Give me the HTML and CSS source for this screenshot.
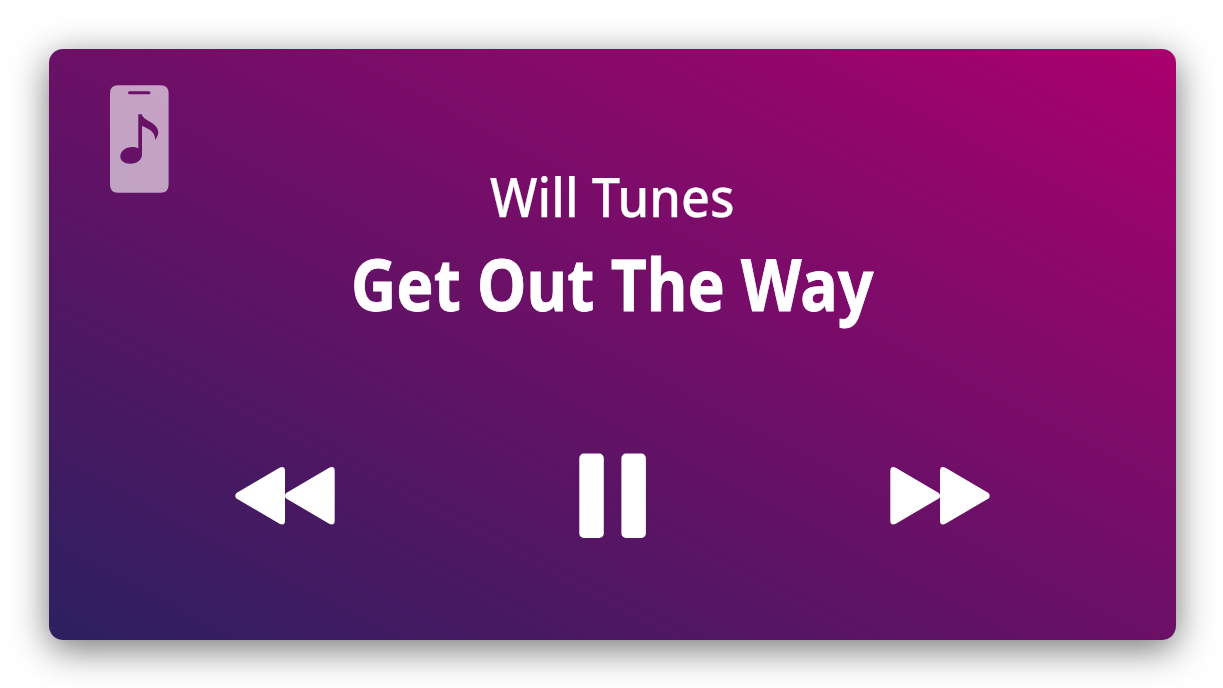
FILE: index.html
```html
<!DOCTYPE html>
<html lang="en">
<head>
<meta charset="utf-8">
<title>Will Tunes</title>
<link rel="stylesheet" href="styles.css">
</head>
<body>
<main class="player">
  <svg class="device" viewBox="0 0 59 108" aria-hidden="true">
    <path fill-rule="evenodd" d="M8 .3H50.600Q58.600 .3 58.600 8.300V99.800Q58.600 107.800 50.600 107.800H8Q0 107.800 0 99.800V8.300Q0 .3 8 .3ZM19.500 6.300Q18 6.300 18 7.800Q18 9.300 19.500 9.300H39Q40.500 9.300 40.500 7.800Q40.500 6.300 39 6.300ZM28.300 29.300H31.800C33 36 48.300 37.500 48.300 47.500C48.300 50 46.600 52.500 45.300 55C44.800 46 39 44 32 41V69C32 75 27 78.700 20.500 78.700C14 78.700 10.300 75.500 10.300 71.500C10.300 66 16 62 22 62C24.500 62 26.600 62.500 28.300 63.300Z"/>
  </svg>
  <header class="track">
    <p class="artist">Will Tunes</p>
    <h1 class="title">Get Out The Way</h1>
  </header>
  <nav class="controls">
    <button class="control" aria-label="Previous">
      <svg class="skip" viewBox="0 0 100 58"><path id="arrow" d="M1.500 26L44.500 .8Q50 -1.500 50 4V53.500Q50 59 44.500 56.700L1.500 31.500Q-1 29 1.500 26Z"/><use href="#arrow" x="49.700"/></svg>
    </button>
    <button class="control" aria-label="Pause">
      <svg class="pause" viewBox="0 0 67 85"><rect x=".3" y=".6" width="24.500" height="84.300" rx="4.500"/><rect x="42.400" y=".6" width="24.500" height="84.300" rx="4.500"/></svg>
    </button>
    <button class="control" aria-label="Next">
      <svg class="skip forward" viewBox="0 0 100 58"><use href="#arrow"/><use href="#arrow" x="49.700"/></svg>
    </button>
  </nav>
</main>
</body>
</html>
```
FILE: styles.css
```css
* { box-sizing: border-box; }
body { display: flow-root; margin: 0; height: 688px; overflow: hidden; background: #fff; font-family: "Noto Sans", "Open Sans", sans-serif; }
.player {
  position: relative;
  width: 1126.6px;
  height: 590.5px;
  margin: 49.2px 0 0 49.3px;
  display: flow-root;
  border-radius: 14px;
  color: #fff;
  background: linear-gradient(to top right, #2c2060, #aa006e);
  box-shadow: 0 9px 37px rgba(0, 0, 0, .55);
}
.device { position: absolute; left: 60.7px; top: 35.800px; width: 59px; height: 108px; fill: #fff; opacity: .61; }
.track { padding-top: 110px; text-align: center; }
.artist { margin: 0; font-size: 54px; line-height: 74px; font-weight: 500; -webkit-text-stroke: .25px #fff; transform: scaleX(.936); }
.title { margin: 0; font-size: 72px; line-height: 100px; font-weight: 700; -webkit-text-stroke: .8px #fff; transform: scaleX(.869); }
.controls { display: flex; justify-content: space-between; align-items: center; height: 85px; margin: 120px 186px 0; }
.control { display: flex; padding: 0; border: 0; background: none; }
.control svg { display: block; fill: #fff; }
.skip { width: 100px; height: 58px; }
.forward { transform: scaleX(-1); }
.pause { width: 67px; height: 85px; }
```
